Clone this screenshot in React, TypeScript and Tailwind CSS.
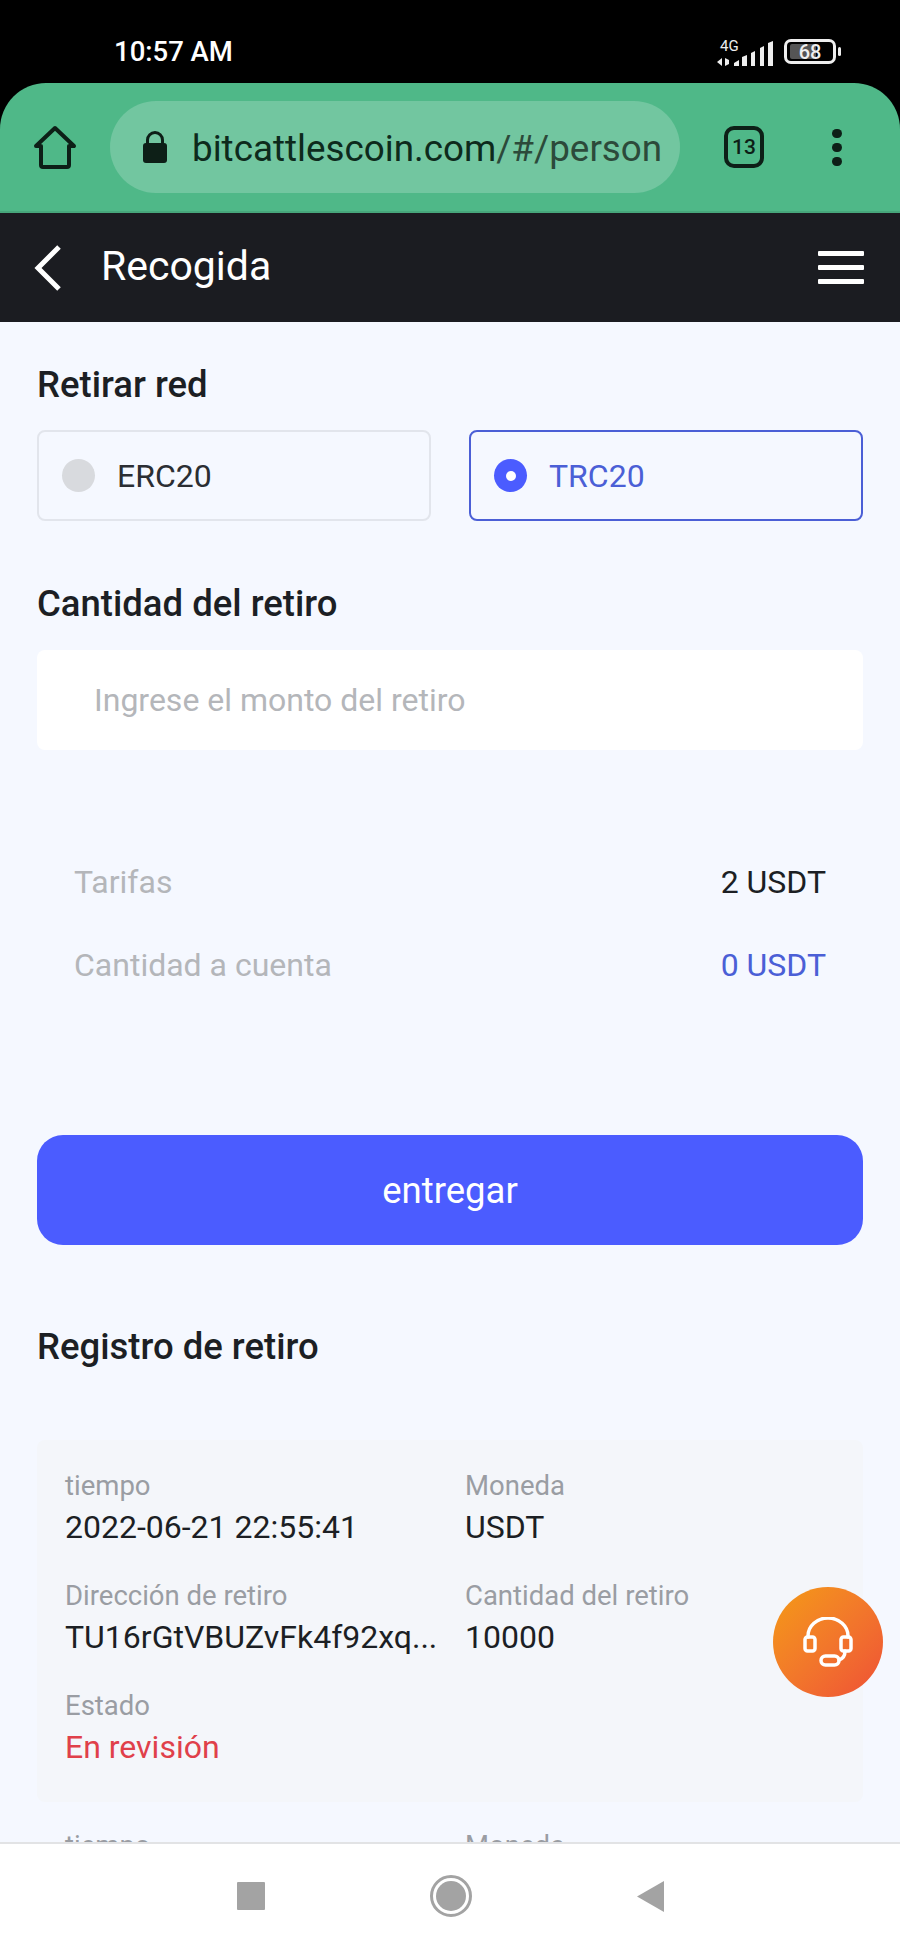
import React from "react";

const Field = ({ label, children, w }: { label: string; children: React.ReactNode; w?: string }) => (
  <div className={w}>
    <div className="text-[27.5px] leading-[36px] text-[#9a9da3]">{label}</div>
    <div className="text-[32px] leading-[40px] mt-[3px] text-[#1c1f24] whitespace-nowrap">{children}</div>
  </div>
);

const Home = () => (
  <svg width="44" height="44" viewBox="0 0 44 44" fill="none" stroke="#0d1f17" strokeWidth="4" strokeLinejoin="round">
    <path d="M3 21 22 3l19 18h-5v19a2 2 0 0 1-2 2H10a2 2 0 0 1-2-2V21z" />
  </svg>
);

export default function App() {
  return (
    <div className="relative w-[900px] h-[1950px] flex flex-col overflow-hidden bg-black font-['Roboto',sans-serif]">
      {/* status bar */}
      <div className="h-[83px] shrink-0 flex items-center justify-between pl-[114px] pr-[64px] pt-[20px] text-white">
        <span className="text-[27.5px] font-medium leading-none">10:57 AM</span>
        <div className="flex items-center gap-[11px]">
          <svg width="56" height="28" viewBox="0 0 56 28" fill="#eee">
            <text x="3" y="13" fontSize="15" fontFamily="Roboto" fill="#eee">4G</text>
            <path d="M0 24l5-4v8zM8 20v8l4-2v-4zM17 28v-3l5-3v6zM25 28V19l5-2v11zM34 28V15l4-2v15z" />
            <path d="M43 28V10l4-2v20zM51 28V5l5-2v25z" />
          </svg>
          <div className="relative w-[52px] h-[25px] rounded-[7px] border-[3px] border-[#eee] flex items-center justify-center">
            <div className="absolute left-[3px] top-[2px] bottom-[2px] w-[26px] bg-[#555] rounded-[2px]" />
            <span className="relative text-[20px] font-medium leading-none text-[#eee]">68</span>
            <div className="absolute -right-[8px] top-[5px] w-[3px] h-[9px] rounded-full bg-[#eee]" />
          </div>
        </div>
      </div>

      {/* browser toolbar */}
      <div className="h-[130px] shrink-0 bg-[#4fb888] rounded-t-[46px] flex items-center pl-[33px] border-b-[2px] border-[#47a67b]">
        <Home />
        <div className="ml-[33px] w-[570px] h-[92px] rounded-[46px] bg-[#72c6a0] flex items-center pl-[32px] overflow-hidden">
          <svg width="26" height="32" viewBox="0 0 26 32" fill="#0d1f17">
            <path d="M4 13V9a9 9 0 0 1 18 0v4h-3V9a6 6 0 0 0-12 0v4z" />
            <rect x="1" y="12" width="24" height="20" rx="3" />
          </svg>
          <span className="ml-[24px] mt-[4px] text-[36.8px] leading-none text-[#0d2a1c] whitespace-nowrap">
            bitcattlescoin.com<span className="text-[#2c4a3a]">/#/person</span>
          </span>
        </div>
        <div className="ml-[44px] w-[40px] h-[42px] rounded-[10px] border-[4px] border-[#0d1f17] flex items-center justify-center text-[21px] font-medium text-[#0d1f17] leading-none">
          13
        </div>
        <div className="ml-[68px] flex flex-col gap-[5px]">
          <div className="w-[10px] h-[9px] rounded-full bg-[#0d1f17]" />
          <div className="w-[10px] h-[9px] rounded-full bg-[#0d1f17]" />
          <div className="w-[10px] h-[9px] rounded-full bg-[#0d1f17]" />
        </div>
      </div>

      {/* nav */}
      <div className="h-[109px] shrink-0 bg-[#1b1c21] flex items-center justify-between pl-[34px] pr-[36px] text-white">
        <div className="flex items-center">
          <svg width="28" height="46" viewBox="0 0 28 46" fill="none" stroke="#fff" strokeWidth="5">
            <path d="M25 2 4 23l21 21" />
          </svg>
          <span className="ml-[39px] -mt-[2px] text-[41px] leading-none">Recogida</span>
        </div>
        <div className="flex flex-col gap-[9px]">
          <div className="w-[46px] h-[5px] bg-white rounded-[1px]" />
          <div className="w-[46px] h-[5px] bg-white rounded-[1px]" />
          <div className="w-[46px] h-[5px] bg-white rounded-[1px]" />
        </div>
      </div>

      {/* page */}
      <div className="flex-1 min-h-0 overflow-hidden bg-[#f5f8ff] px-[37px] pt-[41px]">
        <div className="text-[36.5px] leading-[44px] font-medium text-[#1c1f24]">Retirar red</div>
        <div className="mt-[23px] flex gap-[38px]">
          <div className="flex-1 h-[91px] rounded-[8px] border-2 border-[#e2e5ec] flex items-center pl-[23px]">
            <div className="w-[33px] h-[33px] rounded-full bg-[#d8dade]" />
            <span className="ml-[22px] text-[32px] text-[#2b2e33]">ERC20</span>
          </div>
          <div className="flex-1 h-[91px] rounded-[8px] border-2 border-[#4b5fd6] flex items-center pl-[23px]">
            <div className="w-[33px] h-[33px] rounded-full bg-[#4b5cff] flex items-center justify-center">
              <div className="w-[10px] h-[10px] rounded-full bg-white" />
            </div>
            <span className="ml-[22px] text-[32px] text-[#4b5fd6]">TRC20</span>
          </div>
        </div>
        <div className="mt-[61px] text-[36.5px] leading-[44px] font-medium text-[#1c1f24]">Cantidad del retiro</div>
        <div className="mt-[24px] h-[100px] rounded-[8px] bg-white flex items-center pl-[57px] text-[32px] text-[#b4b6ba]">
          Ingrese el monto del retiro
        </div>
        <div className="mt-[104px] px-[37px] flex justify-between text-[32px] leading-[56px]">
          <span className="text-[#b4b6ba]">Tarifas</span>
          <span className="text-[#1c1f24]">2 USDT</span>
        </div>
        <div className="mt-[27px] px-[37px] flex justify-between text-[32px] leading-[56px]">
          <span className="text-[#b4b6ba]">Cantidad a cuenta</span>
          <span className="text-[#4b5fd6]">0 USDT</span>
        </div>
        <div className="mt-[142px] h-[110px] rounded-[26px] bg-[#4b5cff] flex items-center justify-center text-[36.5px] text-white">
          <span className="mt-[2px]">entregar</span>
        </div>
        <div className="mt-[80px] text-[36.5px] leading-[44px] font-medium text-[#1c1f24]">Registro de retiro</div>
        <div className="mt-[71px] h-[362px] bg-[#f4f6fa] rounded-[8px] px-[28px] pt-[28px]">
          <div className="flex">
            <Field label="tiempo" w="w-[400px]">2022-06-21 22:55:41</Field>
            <Field label="Moneda">USDT</Field>
          </div>
          <div className="flex mt-[31px]">
            <Field label="Dirección de retiro" w="w-[400px]">TU16rGtVBUZvFk4f92xq...</Field>
            <Field label="Cantidad del retiro">10000</Field>
          </div>
          <div className="mt-[31px]">
            <Field label="Estado">
              <span className="text-[#e0404a]">En revisión</span>
            </Field>
          </div>
        </div>
        <div className="mt-[26px] flex pl-[28px] text-[27.5px] leading-[36px] text-[#9a9da3]">
          <div className="w-[400px]">tiempo</div>
          <div>Moneda</div>
        </div>
      </div>

      {/* android nav */}
      <div className="h-[108px] shrink-0 bg-white border-t-2 border-[#e2e3e5] flex items-center justify-center gap-[165px] pb-[2px]">
        <div className="w-[28px] h-[28px] bg-[#a3a3a3] rounded-[1px]" />
        <div className="w-[42px] h-[42px] rounded-full border-[3px] border-[#a3a3a3] flex items-center justify-center">
          <div className="w-[30px] h-[30px] rounded-full bg-[#a3a3a3]" />
        </div>
        <svg width="27" height="31" viewBox="0 0 27 31" fill="#a3a3a3">
          <path d="M27 0v31L0 15.5z" />
        </svg>
      </div>

      {/* support button */}
      <div className="absolute left-[773px] top-[1587px] w-[110px] h-[110px] rounded-full bg-gradient-to-br from-[#f49a12] to-[#ee4f35] flex items-center justify-center">
        <svg width="50" height="50" viewBox="0 0 50 50" fill="none" stroke="#fff" strokeWidth="3.5" strokeLinecap="round" strokeLinejoin="round">
          <path d="M5 20v-1a20 18 0 0 1 40 0v1" />
          <rect x="2" y="20" width="10" height="14" rx="2.5" />
          <rect x="38" y="20" width="10" height="14" rx="2.5" />
          <path d="M42 34c0 6-3 8-6 9" />
          <rect x="18" y="39" width="18" height="9" rx="4.5" />
        </svg>
      </div>
    </div>
  );
}
